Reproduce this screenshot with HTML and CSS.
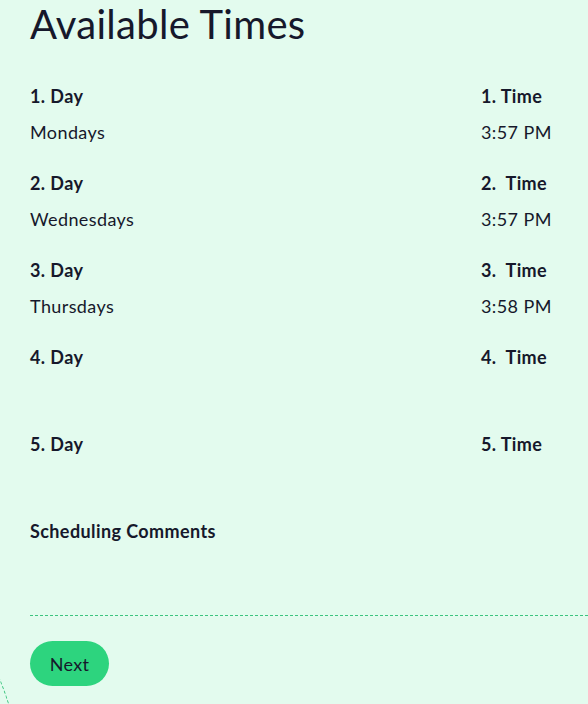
FILE: index.html
```html
<!DOCTYPE html>
<html>
<head>
<meta charset="utf-8">
<link rel="stylesheet" href="styles.css">
</head>
<body>
<div class="page">
  <h1 class="title">Available Times</h1>
  <div class="grid">
    <div class="field"><div class="label">1. Day</div><div class="value">Mondays</div></div>
    <div class="field"><div class="label">1. Time</div><div class="value">3:57 PM</div></div>
    <div class="field"><div class="label">2. Day</div><div class="value">Wednesdays</div></div>
    <div class="field"><div class="label">2.&nbsp; Time</div><div class="value">3:57 PM</div></div>
    <div class="field"><div class="label">3. Day</div><div class="value">Thursdays</div></div>
    <div class="field"><div class="label">3.&nbsp; Time</div><div class="value">3:58 PM</div></div>
    <div class="field"><div class="label">4. Day</div><div class="value"></div></div>
    <div class="field"><div class="label">4.&nbsp; Time</div><div class="value"></div></div>
    <div class="field"><div class="label">5. Day</div><div class="value"></div></div>
    <div class="field"><div class="label">5. Time</div><div class="value"></div></div>
    <div class="field full"><div class="label">Scheduling Comments</div><div class="value"></div></div>
  </div>
  <div class="divider"></div>
  <div class="actions"><button class="next">Next</button></div>
  <div class="deco"></div>
</div>
</body>
</html>
```
FILE: styles.css
```css
html, body {
  margin: 0;
  padding: 0;
  background: #e3fbee;
  height: 100%;
  overflow: hidden;
}
.page {
  position: relative;
  height: 704px;
  padding-left: 30px;
  font-family: "Lato", "Noto Sans", sans-serif;
  color: #16182b;
  overflow: hidden;
}
.title {
  margin: 0;
  font-size: 40px;
  line-height: 48px;
  font-weight: 400;
  letter-spacing: 0.3px;
}
.grid {
  display: grid;
  grid-template-columns: 451px 1fr;
  margin-top: 35px;
}
.field {
  display: flex;
  flex-direction: column;
  gap: 10px;
  padding-bottom: 25px;
}
.field.full {
  grid-column: 1 / -1;
}
.label {
  font-size: 18px;
  font-weight: 700;
  line-height: 26px;
  letter-spacing: 0.4px;
}
.value {
  font-size: 18px;
  line-height: 26px;
  min-height: 26px;
  letter-spacing: 0.4px;
}
.divider {
  margin-top: 10px;
  border-top: 1px dashed #3cc47f;
}
.actions {
  padding-top: 25px;
}
.next {
  width: 79px;
  height: 45px;
  border: none;
  border-radius: 23px;
  background: #2dd47e;
  color: #16182b;
  font-family: "Lato", "Noto Sans", sans-serif;
  font-size: 18px;
  letter-spacing: 0.3px;
  padding: 0;
}
.deco {
  position: absolute;
  left: -622px;
  top: 478px;
  width: 644px;
  height: 644px;
  border-radius: 50%;
  border: 1px dashed #3cc47f;
}
```
